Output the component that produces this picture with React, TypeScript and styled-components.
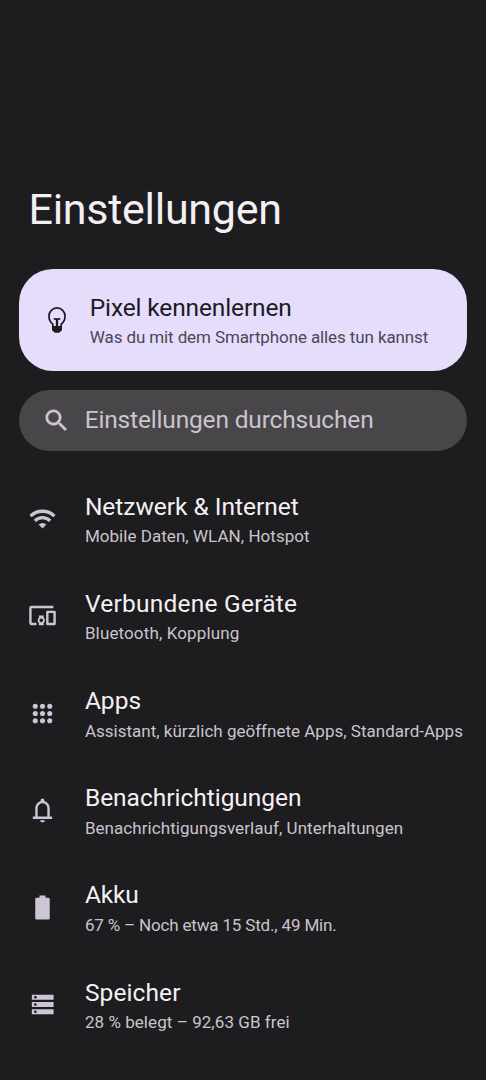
import React from "react";
import styled, { createGlobalStyle } from "styled-components";

const GlobalStyle = createGlobalStyle`
  * { box-sizing: border-box; }
  body {
    margin: 0;
    background: #1d1c1e;
    font-family: Roboto, "Liberation Sans", sans-serif;
    -webkit-font-smoothing: antialiased;
  }
`;

const Screen = styled.main`
  display: flex;
  flex-direction: column;
  width: 486px;
  height: 1080px;
  padding-top: 183px;
  overflow: hidden;
  background: #1d1c1e;
`;

const Heading = styled.h1`
  margin: 0 0 34px 28.5px;
  font-size: 43px;
  line-height: 52px;
  font-weight: 400;
  letter-spacing: -0.28px;
  color: #f4eff4;
`;

const TipCard = styled.section`
  display: flex;
  align-items: center;
  height: 101.5px;
  margin: 0 19px;
  padding: 2px 0 0 28px;
  gap: 22.8px;
  border-radius: 34px;
  background: #e6ddfc;
`;

const SearchBar = styled.div`
  display: flex;
  align-items: center;
  height: 61.3px;
  margin: 19.3px 19px 0;
  padding-left: 23.3px;
  gap: 13.4px;
  border-radius: 31px;
  background: #484649;
`;

const SearchLabel = styled.span`
  font-size: 24.5px;
  line-height: 30px;
  letter-spacing: -0.17px;
  white-space: nowrap;
  color: #cac4cf;
`;

const List = styled.ul`
  display: flex;
  flex-direction: column;
  margin: 20.3px 0 0;
  padding: 0;
  list-style: none;
`;

const Row = styled.li`
  display: flex;
  align-items: center;
  flex: none;
  height: 97.2px;
  padding-left: 28px;
  gap: 27.9px;
`;

const Icon = styled.svg`
  flex: none;
  width: 29px;
  height: 29px;
  margin-bottom: 2.5px;
  fill: #cdc5d6;
`;

const SearchIcon = styled(Icon)`
  margin-bottom: 0;
  stroke: #cdc5d6;
  stroke-width: 0.35px;
`;

const BulbIcon = styled.svg`
  flex: none;
  width: 20px;
  height: 28px;
  margin-bottom: 2px;
`;

const Texts = styled.div`
  display: flex;
  flex-direction: column;
  gap: 2.5px;
  white-space: nowrap;
`;

const Title = styled.span<{ $spacing: number; $dark?: boolean }>`
  font-size: 24.5px;
  line-height: 30px;
  letter-spacing: ${(p) => p.$spacing}px;
  color: ${(p) => (p.$dark ? "#1c1b1e" : "#f5f0f5")};
`;

const Summary = styled.span<{ $spacing: number; $dark?: boolean }>`
  font-size: 17px;
  line-height: 24px;
  letter-spacing: ${(p) => p.$spacing}px;
  color: ${(p) => (p.$dark ? "#4c4753" : "#cac4cf")};
`;

const wifi = (
  <g fill="none" stroke="#cdc5d6" strokeWidth="2.7">
    <path d="M2.1 10.1a14 14 0 0 1 19.8 0" />
    <path d="M5.7 13.9a8.9 8.9 0 0 1 12.6 0" />
    <path d="M12 20.2 8.8 17a4.600 4.600 0 0 1 6.400 0z" fill="#cdc5d6" stroke="none" />
  </g>
);

const devices = (
  <path d="M3 6h18V4H3c-1.1 0-2 .9-2 2v12c0 1.1.9 2 2 2h4v-2H3V6zm10 6H9v1.78c-.61.55-1 1.33-1 2.22s.39 1.67 1 2.22V20h4v-1.78c.61-.55 1-1.34 1-2.22s-.39-1.67-1-2.22V12zm-2 5.5c-.83 0-1.5-.67-1.5-1.5s.67-1.5 1.5-1.5 1.5.67 1.5 1.5-.67 1.5-1.5 1.5zM22 8h-6c-.5 0-1 .5-1 1v10c0 .5.5 1 1 1h6c.5 0 1-.5 1-1V9c0-.5-.5-1-1-1zm-1 10h-4v-8h4v8z" />
);

const apps = (
  <g>
    {[6, 12, 18].map((y) => [6, 12, 18].map((x) => <circle key={`${x}-${y}`} cx={x} cy={y} r="2.1" />))}
  </g>
);

const bell = (
  <path
    transform="translate(0 24) scale(.025)"
    d="M160-200v-80h80v-280q0-83 50-147.5T420-792v-28q0-25 17.5-42.5T480-880q25 0 42.5 17.5T540-820v28q80 20 130 84.5T720-560v280h80v80H160Zm320 120q-33 0-56.5-23.5T400-160h160q0 33-23.5 56.5T480-80ZM320-280h320v-280q0-66-47-113t-113-47q-66 0-113 47t-47 113v280Z"
  />
);

const battery = (
  <path d="M9.5 2h5v2h2.300c.7 0 1.200.5 1.200 1.200v15.600c0 .7-.5 1.200-1.200 1.200H7.200c-.7 0-1.200-.5-1.200-1.200V5.200C6 4.500 6.500 4 7.200 4h2.300z" />
);

const storage = (
  <g>
    <path d="M3.200 4h18v4h-18zM3.200 10h18v4h-18zM3.200 16h18v4h-18z" />
    <g fill="#1d1c1e">
      <circle cx="6.100" cy="6" r="1.100" />
      <circle cx="6.100" cy="12" r="1.100" />
      <circle cx="6.100" cy="18" r="1.100" />
    </g>
  </g>
);

type Entry = {
  icon: React.ReactNode;
  title: string;
  titleSpacing: number;
  summary: string;
  summarySpacing: number;
};

const entries: Entry[] = [
  { icon: wifi, title: "Netzwerk & Internet", titleSpacing: -0.02, summary: "Mobile Daten, WLAN, Hotspot", summarySpacing: 0.04 },
  { icon: devices, title: "Verbundene Geräte", titleSpacing: 0.23, summary: "Bluetooth, Kopplung", summarySpacing: 0.13 },
  { icon: apps, title: "Apps", titleSpacing: 0, summary: "Assistant, kürzlich geöffnete Apps, Standard-Apps", summarySpacing: 0.01 },
  { icon: bell, title: "Benachrichtigungen", titleSpacing: -0.02, summary: "Benachrichtigungsverlauf, Unterhaltungen", summarySpacing: 0.06 },
  { icon: battery, title: "Akku", titleSpacing: -0.15, summary: "67 % – Noch etwa 15 Std., 49 Min.", summarySpacing: -0.17 },
  { icon: storage, title: "Speicher", titleSpacing: 0.1, summary: "28 % belegt – 92,63 GB frei", summarySpacing: 0.06 },
];

export default function App() {
  return (
    <>
      <GlobalStyle />
      <Screen>
        <Heading>Einstellungen</Heading>
        <TipCard>
          <BulbIcon viewBox="0 0 20 28">
            <g fill="none" stroke="#1c1b1e">
              <path d="M5.800 21v-2.900C3.300 16.400 1.950 13.600 1.950 10a8.050 8.050 0 0 1 16.100 0c0 3.600-1.350 6.400-3.850 8.100V21" strokeWidth="1.700" />
              <path d="M6.700 13h6.600" strokeWidth="1.700" />
              <path d="M10 13v8" strokeWidth="2.300" />
            </g>
            <path d="M5 20h10v3.500c0 .9-.5 1.500-1.300 1.700-.6 1.100-1.500 1.600-3.700 1.600s-3.100-.5-3.700-1.600C5.500 25 5 24.400 5 23.500z" fill="#1c1b1e" />
          </BulbIcon>
          <Texts>
            <Title $dark $spacing={-0.14}>Pixel kennenlernen</Title>
            <Summary $dark $spacing={-0.11}>Was du mit dem Smartphone alles tun kannst</Summary>
          </Texts>
        </TipCard>
        <SearchBar>
          <SearchIcon viewBox="0 0 24 24">
            <path d="M15.500 14h-.79l-.28-.27A6.471 6.471 0 0 0 16 9.500 6.500 6.500 0 1 0 9.500 16c1.610 0 3.090-.59 4.230-1.570l.27.28v.79l5 4.990L20.490 19l-4.990-5zm-6 0C7.010 14 5 11.990 5 9.500S7.010 5 9.500 5 14 7.010 14 9.500 11.990 14 9.500 14z" />
          </SearchIcon>
          <SearchLabel>Einstellungen durchsuchen</SearchLabel>
        </SearchBar>
        <List>
          {entries.map((e) => (
            <Row key={e.title}>
              <Icon viewBox="0 0 24 24">{e.icon}</Icon>
              <Texts>
                <Title $spacing={e.titleSpacing}>{e.title}</Title>
                <Summary $spacing={e.summarySpacing}>{e.summary}</Summary>
              </Texts>
            </Row>
          ))}
        </List>
      </Screen>
    </>
  );
}
